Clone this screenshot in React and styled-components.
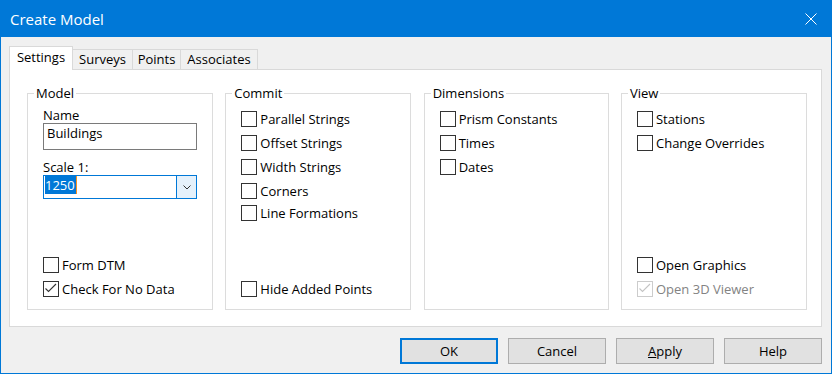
import React from "react"
import styled, { createGlobalStyle } from "styled-components"

const GlobalStyle = createGlobalStyle`
  html, body {
    margin: 0;
    padding: 0;
    background: #ffffff;
  }
`

const font = `"Segoe UI", "Open Sans", sans-serif`

const Window = styled.div`
  width: 832px;
  height: 374px;
  box-sizing: border-box;
  display: flex;
  flex-direction: column;
  border: 1px solid #0078d7;
  border-top: none;
  background: #f0f0f0;
  font-family: ${font};
  font-size: 13px;
  color: #000;
`

const TitleBar = styled.div`
  height: 37px;
  flex: none;
  display: flex;
  align-items: center;
  justify-content: space-between;
  background: #0078d7;
  color: #fff;
  padding: 0 14px 0 9px;
  font-size: 15px;
`

const Body = styled.div`
  flex: 1;
  display: flex;
  flex-direction: column;
  padding: 9px 9px 9px 8px;
`

const TabStrip = styled.div`
  display: flex;
  align-items: flex-end;
  height: 23px;
`

const Tab = styled.div`
  box-sizing: border-box;
  width: ${(p) => p.$w}px;
  height: ${(p) => (p.$active ? 24 : 20)}px;
  margin-bottom: ${(p) => (p.$active ? -1 : 0)}px;
  padding-top: ${(p) => (p.$active ? 2 : 1)}px;
  display: flex;
  justify-content: center;
  line-height: 16px;
  background: ${(p) => (p.$active ? "#ffffff" : "#f0f0f0")};
  border: 1px solid #d9d9d9;
  border-bottom: none;
  position: relative;
  z-index: ${(p) => (p.$active ? 1 : 0)};
  & + & {
    margin-left: -1px;
  }
`

const Panel = styled.div`
  box-sizing: border-box;
  height: 258px;
  background: #fff;
  border: 1px solid #d9d9d9;
  padding: 23px 14px 16px 17px;
  display: flex;
  justify-content: space-between;
`

const Group = styled.div`
  position: relative;
  box-sizing: border-box;
  width: ${(p) => p.$w}px;
  height: 217px;
  border: 1px solid #dcdcdc;
  padding: ${(p) => p.$pt ?? 17}px 10px 12px 15px;
  display: flex;
  flex-direction: column;
`

const GroupTitle = styled.div`
  position: absolute;
  top: -9px;
  left: 6px;
  padding: 0 2px;
  background: #fff;
  line-height: 16px;
`

const CheckList = styled.div`
  display: flex;
  flex-direction: column;
  gap: 8px;
  margin-top: ${(p) => (p.$bottom ? "auto" : "0")};
`

const CheckRow = styled.label`
  display: flex;
  align-items: center;
  height: 16px;
  line-height: 16px;
  white-space: nowrap;
  margin-top: ${(p) => p.$mt || 0}px;
  color: ${(p) => (p.$disabled ? "#838383" : "#000")};
`

const Box = styled.span`
  box-sizing: border-box;
  width: 16px;
  height: 16px;
  flex: none;
  margin-right: 3px;
  border: 1px solid ${(p) => (p.$disabled ? "#cccccc" : "#333333")};
  background: #fff;
  display: flex;
`

const FieldLabel = styled.div`
  line-height: 16px;
  margin-top: ${(p) => p.$mt || 0}px;
`

const TextBox = styled.div`
  box-sizing: border-box;
  width: 154px;
  height: 27px;
  border: 1px solid #7a7a7a;
  padding: 1px 0 0 3px;
  line-height: 16px;
  background: #fff;
`

const Combo = styled.div`
  box-sizing: border-box;
  width: 154px;
  height: 24px;
  border: 1px solid #0078d7;
  display: flex;
  background: #fff;
`

const ComboText = styled.div`
  flex: 1;
  display: flex;
  align-items: flex-start;
  padding-left: 1px;
`

const Selection = styled.span`
  background: #0078d7;
  color: #fff;
  height: 18px;
  line-height: 18px;
  padding-right: 1px;
`

const Caret = styled.span`
  width: 1px;
  height: 18px;
  background: #f7901e;
`

const DropButton = styled.div`
  width: 19px;
  border-left: 1px solid #0078d7;
  background: #e5f1fb;
  display: flex;
  align-items: center;
  justify-content: center;
`

const ButtonRow = styled.div`
  display: flex;
  justify-content: flex-end;
  gap: 10px;
  margin-top: 11px;
`

const Button = styled.button`
  box-sizing: border-box;
  width: 98px;
  height: 26px;
  padding: 0;
  font-family: ${font};
  font-size: 13px;
  color: #000;
  background: #e1e1e1;
  border: ${(p) => (p.$default ? "2px solid #0078d7" : "1px solid #adadad")};
  border-radius: 0;
  u {
    text-decoration-thickness: 1px;
  }
`

const CloseIcon = () => (
  <svg width="12" height="12" viewBox="0 0 12 12">
    <path d="M0.5 0.5 L11.5 11.5 M11.5 0.5 L0.5 11.5" stroke="#fff" strokeWidth="1" fill="none" />
  </svg>
)

const Checkbox = ({ label, checked, disabled, mt }) => (
  <CheckRow $disabled={disabled} $mt={mt}>
    <Box $disabled={disabled}>
      {checked && (
        <svg width="14" height="14" viewBox="0 0 14 14">
          <polyline
            points="1.5,6.5 4.5,9.5 12,2"
            fill="none"
            stroke={disabled ? "#c4c4c4" : "#333"}
            strokeWidth="1.1"
          />
        </svg>
      )}
    </Box>
    {label}
  </CheckRow>
)

const tabs = [
  { name: "Settings", w: 64, active: true },
  { name: "Surveys", w: 61 },
  { name: "Points", w: 49 },
  { name: "Associates", w: 78 },
]

export default function App() {
  return (
    <>
      <GlobalStyle />
      <Window>
        <TitleBar>
          <span>Create Model</span>
          <CloseIcon />
        </TitleBar>
        <Body>
          <TabStrip>
            {tabs.map((t) => (
              <Tab key={t.name} $w={t.w} $active={t.active}>
                {t.name}
              </Tab>
            ))}
          </TabStrip>
          <Panel>
            <Group $w={186} $pt={13}>
              <GroupTitle>Model</GroupTitle>
              <FieldLabel>Name</FieldLabel>
              <TextBox>Buildings</TextBox>
              <FieldLabel $mt={9}>Scale 1:</FieldLabel>
              <Combo>
                <ComboText>
                  <Selection>1250</Selection>
                  <Caret />
                </ComboText>
                <DropButton>
                  <svg width="8" height="5" viewBox="0 0 8 5">
                    <polyline points="0.5,0.5 4,4 7.5,0.5" fill="none" stroke="#333" strokeWidth="1" />
                  </svg>
                </DropButton>
              </Combo>
              <CheckList $bottom>
                <Checkbox label="Form DTM" />
                <Checkbox label="Check For No Data" checked />
              </CheckList>
            </Group>
            <Group $w={186}>
              <GroupTitle>Commit</GroupTitle>
              <CheckList>
                <Checkbox label="Parallel Strings" />
                <Checkbox label="Offset Strings" />
                <Checkbox label="Width Strings" />
                <Checkbox label="Corners" />
                <Checkbox label="Line Formations" mt={-2} />
              </CheckList>
              <CheckList $bottom>
                <Checkbox label="Hide Added Points" />
              </CheckList>
            </Group>
            <Group $w={185}>
              <GroupTitle>Dimensions</GroupTitle>
              <CheckList>
                <Checkbox label="Prism Constants" />
                <Checkbox label="Times" />
                <Checkbox label="Dates" />
              </CheckList>
            </Group>
            <Group $w={186}>
              <GroupTitle>View</GroupTitle>
              <CheckList>
                <Checkbox label="Stations" />
                <Checkbox label="Change Overrides" />
              </CheckList>
              <CheckList $bottom>
                <Checkbox label="Open Graphics" />
                <Checkbox label="Open 3D Viewer" checked disabled />
              </CheckList>
            </Group>
          </Panel>
          <ButtonRow>
            <Button $default>OK</Button>
            <Button>Cancel</Button>
            <Button>
              <u>A</u>pply
            </Button>
            <Button>Help</Button>
          </ButtonRow>
        </Body>
      </Window>
    </>
  )
}
